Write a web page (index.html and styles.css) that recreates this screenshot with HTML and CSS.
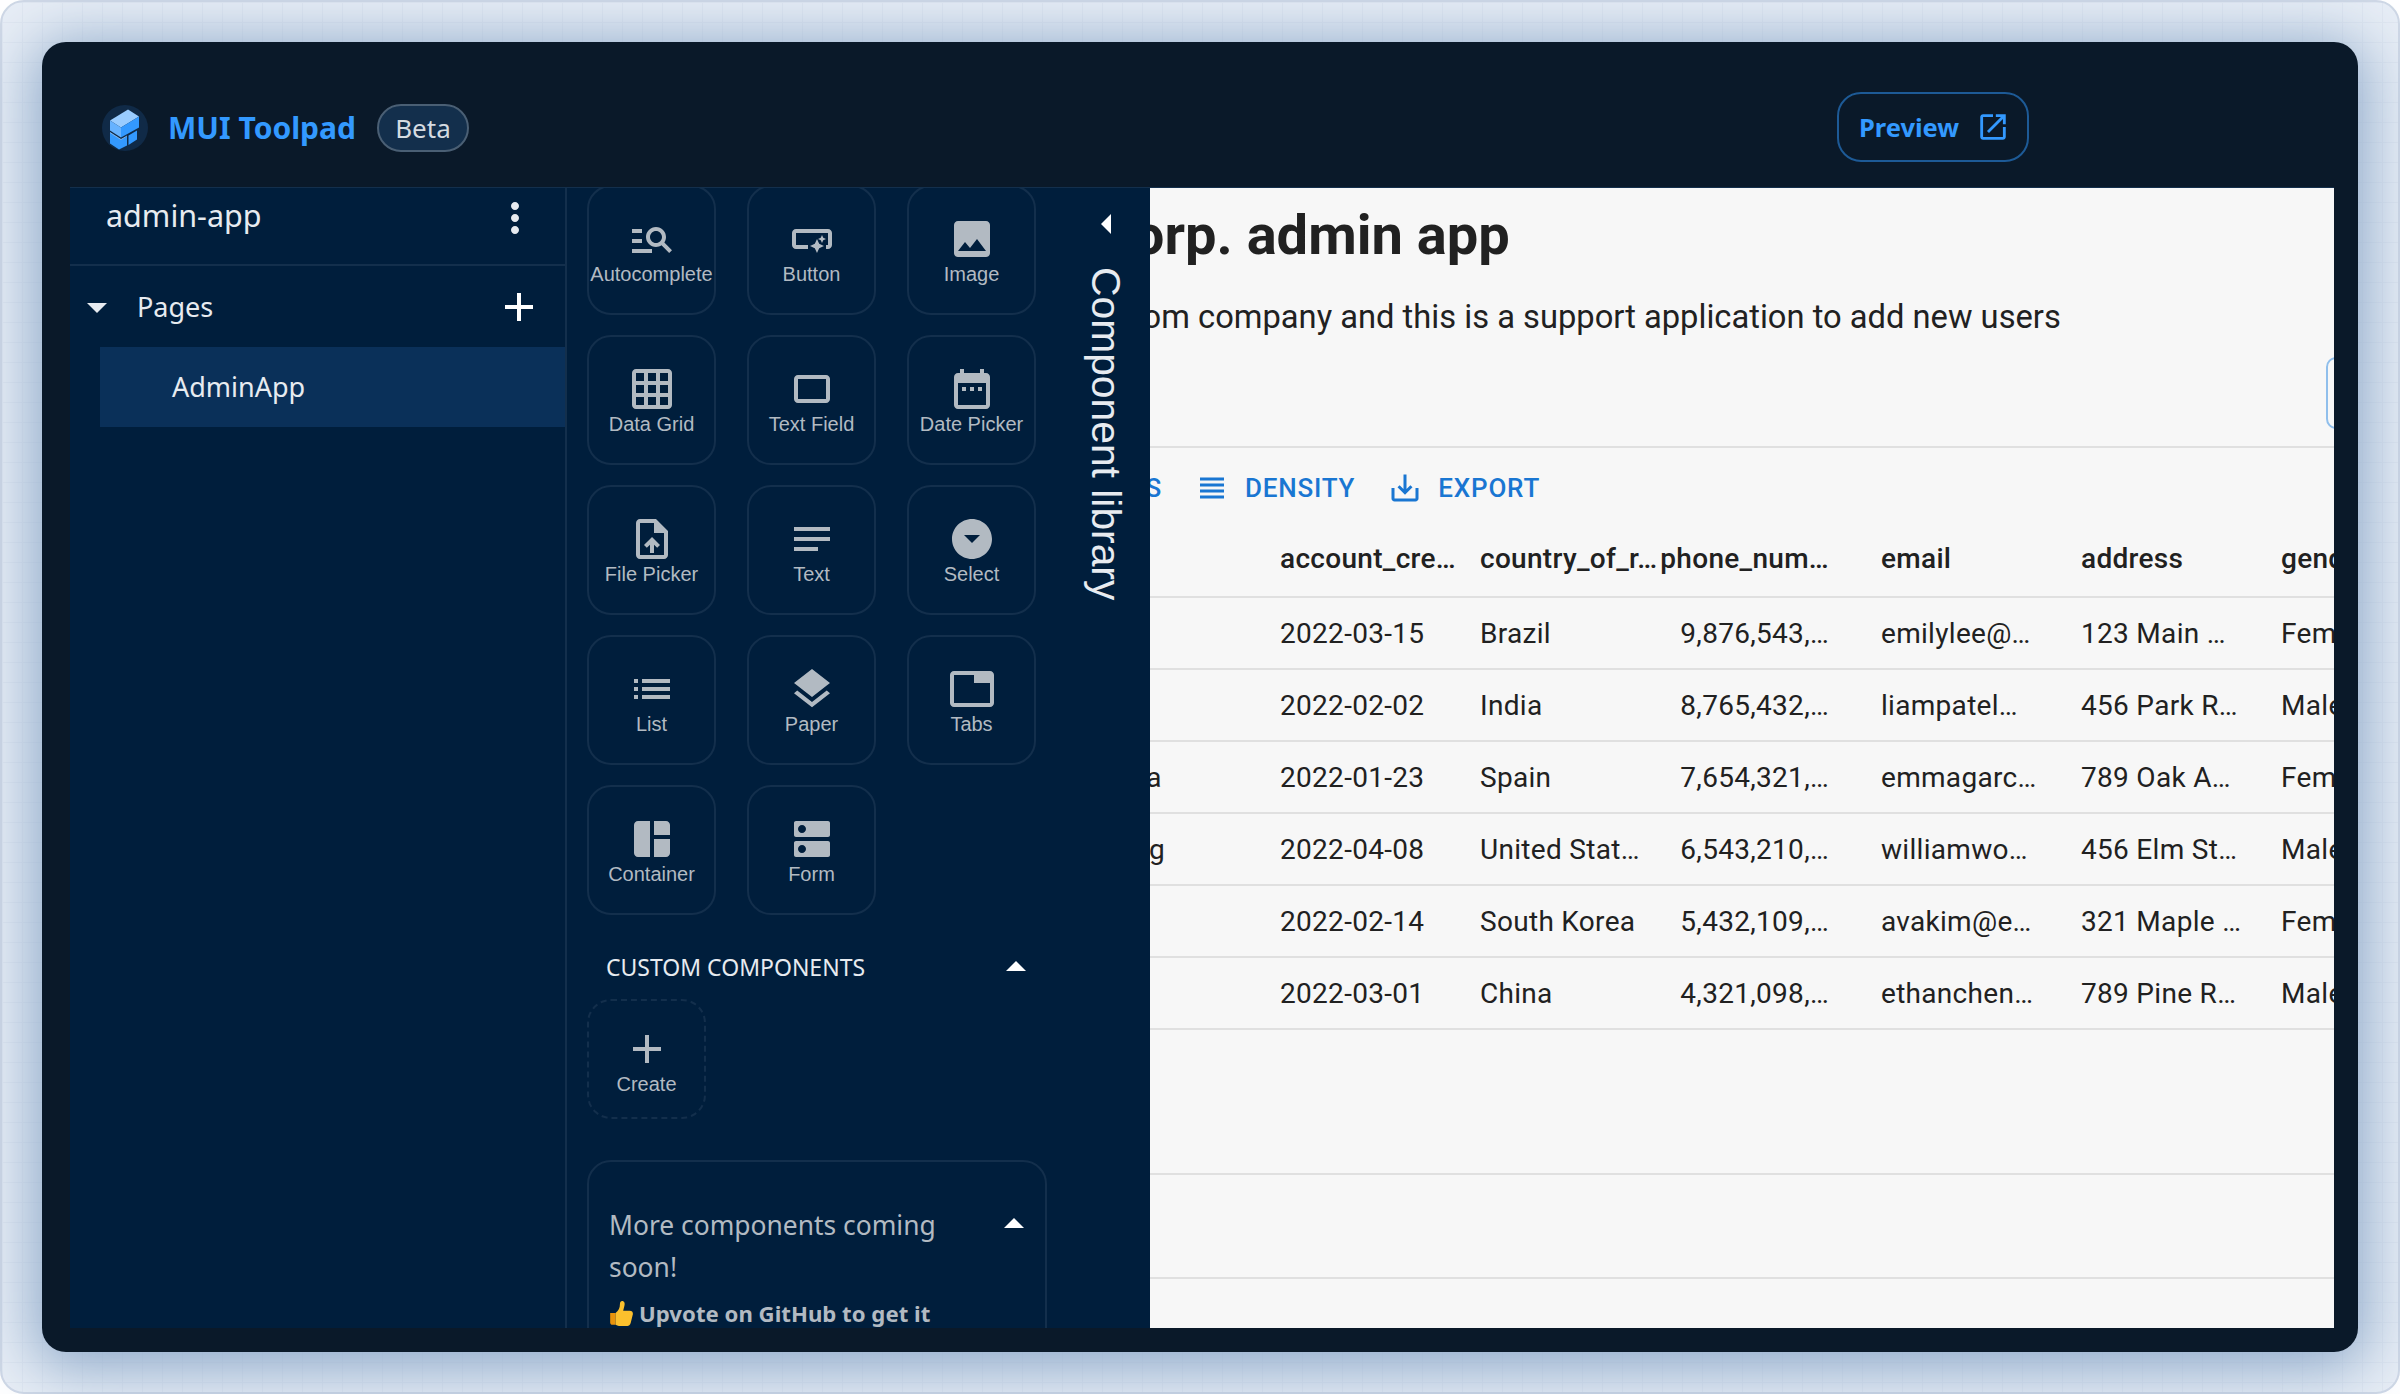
FILE: index.html
```html
<!DOCTYPE html>
<html lang="en">
<head>
    <meta charset="UTF-8" />
    <title>MUI Toolpad</title>
    <link rel="stylesheet" href="styles.css">
</head>
<body>
<div class="frame">
<div class="window">
    <header class="topbar">
        <svg class="logo" viewBox="12 8.5 46 46">
            <circle cx="35" cy="31.5" r="23" fill="#102a47"/>
            <path d="M20 24 38 13 49 20 31 31Z" fill="#99ccff"/>
            <path d="M20 24 31 31V41L20 34Z" fill="#66b2ff"/>
            <path d="M31 31 49 20V31L31 41Z" fill="#3399ff"/>
            <path d="M20 36 31 43 37 40V49L29 53 20 47Z" fill="#3399ff"/>
            <path d="M38.5 39 47 34V43L38.5 48.5Z" fill="#3399ff"/>
            <path d="M20 36 31 43 37 39.5" fill="none" stroke="#99ccff" stroke-width=".8"/>
        </svg>
        <span class="brand">MUI Toolpad</span>
        <span class="chip">Beta</span>
        <a class="preview">Preview
            <svg viewBox="0 0 24 24"><path d="M19 19H5V5h7V3H5c-1.11 0-2 .9-2 2v14c0 1.1.89 2 2 2h14c1.1 0 2-.9 2-2v-7h-2v7zM14 3v2h3.59l-9.83 9.83 1.41 1.41L19 6.41V10h2V3h-7z"/></svg>
        </a>
    </header>
    <div class="workspace">
        <nav class="pages">
            <div class="app-row">
                <span>admin-app</span>
                <svg viewBox="0 0 24 24"><path d="M12 8c1.1 0 2-.9 2-2s-.9-2-2-2-2 .9-2 2 .9 2 2 2zm0 2c-1.1 0-2 .9-2 2s.9 2 2 2 2-.9 2-2-.9-2-2-2zm0 6c-1.1 0-2 .9-2 2s.9 2 2 2 2-.9 2-2-.9-2-2-2z"/></svg>
            </div>
            <div class="pages-row">
                <svg class="caret" viewBox="0 0 24 24"><path d="M7 10l5 5 5-5z"/></svg>
                <span>Pages</span>
                <svg class="add" viewBox="0 0 24 24"><path d="M19 13h-6v6h-2v-6H5v-2h6V5h2v6h6v2z"/></svg>
            </div>
            <div class="page-item">AdminApp</div>
        </nav>
        <aside class="library">
            <div class="lib-scroll">
                <div class="cards">
                    <div class="card"><svg viewBox="0 0 24 24"><path d="M7 9H2V7h5v2zm0 3H2v2h5v-2zm13.59 7-3.83-3.83c-.8.52-1.74.83-2.76.83-2.76 0-5-2.24-5-5s2.24-5 5-5 5 2.24 5 5c0 1.02-.31 1.96-.83 2.75L22 17.59 20.59 19zM17 11c0-1.65-1.35-3-3-3s-3 1.35-3 3 1.35 3 3 3 3-1.35 3-3zM2 19h10v-2H2v2z"/></svg>Autocomplete</div>
                    <div class="card"><svg viewBox="0 0 24 24"><path d="M22 9v6c0 1.1-.9 2-2 2h-1v-2h1V9H4v6h6v2H4c-1.1 0-2-.9-2-2V9c0-1.1.9-2 2-2h16c1.1 0 2 .9 2 2zm-7.5 10 1.09-2.41L18 15.5l-2.41-1.09L14.5 12l-1.09 2.41L11 15.5l2.41 1.09L14.5 19zm2.5-5 .62-1.38L19 12l-1.38-.62L17 10l-.62 1.38L15 12l1.38.62L17 14z"/></svg>Button</div>
                    <div class="card"><svg viewBox="0 0 24 24"><path d="M21 19V5c0-1.1-.9-2-2-2H5c-1.1 0-2 .9-2 2v14c0 1.1.9 2 2 2h14c1.1 0 2-.9 2-2zM8.5 13.5l2.5 3.01L14.5 12l4.5 6H5l3.5-4.5z"/></svg>Image</div>
                    <div class="card"><svg viewBox="0 0 24 24"><path d="M20 2H4c-1.1 0-2 .9-2 2v16c0 1.1.9 2 2 2h16c1.1 0 2-.9 2-2V4c0-1.1-.9-2-2-2zM8 20H4v-4h4v4zm0-6H4v-4h4v4zm0-6H4V4h4v4zm6 12h-4v-4h4v4zm0-6h-4v-4h4v4zm0-6h-4V4h4v4zm6 12h-4v-4h4v4zm0-6h-4v-4h4v4zm0-6h-4V4h4v4z"/></svg>Data Grid</div>
                    <div class="card"><svg viewBox="0 0 24 24"><path d="M19 5H5c-1.1 0-2 .9-2 2v10c0 1.1.9 2 2 2h14c1.1 0 2-.9 2-2V7c0-1.1-.9-2-2-2zm0 12H5V7h14v10z"/></svg>Text Field</div>
                    <div class="card"><svg viewBox="0 0 24 24"><path d="M9 11H7v2h2v-2zm4 0h-2v2h2v-2zm4 0h-2v2h2v-2zm2-7h-1V2h-2v2H8V2H6v2H5c-1.11 0-1.99.9-1.99 2L3 20c0 1.1.89 2 2 2h14c1.1 0 2-.9 2-2V6c0-1.1-.9-2-2-2zm0 16H5V9h14v11z"/></svg>Date Picker</div>
                    <div class="card"><svg viewBox="0 0 24 24"><path d="M14 2H6c-1.1 0-1.99.9-1.99 2L4 20c0 1.1.89 2 1.99 2H18c1.1 0 2-.9 2-2V8l-6-6zm4 18H6V4h7v5h5v11zM8 15.01l1.41 1.41L11 14.84V19h2v-4.16l1.59 1.59L16 15.01 12.01 11 8 15.01z"/></svg>File Picker</div>
                    <div class="card"><svg viewBox="0 0 24 24"><path d="M3 18h12v-2H3v2zM3 6v2h18V6H3zm0 7h18v-2H3v2z"/></svg>Text</div>
                    <div class="card"><svg viewBox="0 0 24 24"><path d="M12 2C6.48 2 2 6.48 2 12s4.48 10 10 10 10-4.48 10-10S17.52 2 12 2zm0 12-4-4h8l-4 4z"/></svg>Select</div>
                    <div class="card"><svg viewBox="0 0 24 24"><path d="M3 13h2v-2H3v2zm0 4h2v-2H3v2zm0-8h2V7H3v2zm4 4h14v-2H7v2zm0 4h14v-2H7v2zM7 7v2h14V7H7z"/></svg>List</div>
                    <div class="card"><svg viewBox="0 0 24 24"><path d="M11.99 18.54l-7.37-5.73L3 14.07l9 7 9-7-1.63-1.27-7.38 5.74zM12 16l7.36-5.73L21 9l-9-7-9 7 1.63 1.27L12 16z"/></svg>Paper</div>
                    <div class="card"><svg viewBox="0 0 24 24"><path d="M21 3H3c-1.1 0-2 .9-2 2v14c0 1.1.9 2 2 2h18c1.1 0 2-.9 2-2V5c0-1.1-.9-2-2-2zm0 16H3V5h10v4h8v10z"/></svg>Tabs</div>
                    <div class="card"><svg viewBox="0 0 24 24"><path d="M11 21H5c-1.1 0-2-.9-2-2V5c0-1.1.9-2 2-2h6v18zm2 0h6c1.1 0 2-.9 2-2v-7h-8v9zm8-11V5c0-1.1-.9-2-2-2h-6v7h8z"/></svg>Container</div>
                    <div class="card"><svg viewBox="0 0 24 24"><path d="M20 13H4c-.55 0-1 .45-1 1v6c0 .55.45 1 1 1h16c.55 0 1-.45 1-1v-6c0-.55-.45-1-1-1zM7 19c-1.1 0-2-.9-2-2s.9-2 2-2 2 .9 2 2-.9 2-2 2zM20 3H4c-.55 0-1 .45-1 1v6c0 .55.45 1 1 1h16c.55 0 1-.45 1-1V4c0-.55-.45-1-1-1zM7 9c-1.1 0-2-.9-2-2s.9-2 2-2 2 .9 2 2-.9 2-2 2z"/></svg>Form</div>
                </div>
                <div class="custom-head">
                    <span>CUSTOM COMPONENTS</span>
                    <svg viewBox="0 0 24 24"><path d="M7 14l5-5 5 5z"/></svg>
                </div>
                <div class="card create"><svg viewBox="0 0 24 24"><path d="M19 13h-6v6h-2v-6H5v-2h6V5h2v6h6v2z"/></svg>Create</div>
                <div class="more">
                    <div class="more-head">
                        <span>More components coming soon!</span>
                        <svg viewBox="0 0 24 24"><path d="M7 14l5-5 5 5z"/></svg>
                    </div>
                    <div class="upvote">
                        <svg viewBox="0 0 22 24">
                            <path d="M1 11h5v11H3c-1 0-2-1-2-2z" fill="#e8930c"/>
                            <path d="M6 11c3-2 4-5 4-8 0-2 1-3 2-3 2 0 3 2 2 5l-1 4h6c2 0 3 1 3 3l-2 8c-.5 2-2 3-3 3H9c-1 0-2-.5-3-1z" fill="#fbc02d"/>
                        </svg>
                        <span>Upvote on GitHub to get it</span>
                    </div>
                </div>
            </div>
            <div class="rail">
                <svg viewBox="0 0 24 24"><path d="M14 7l-5 5 5 5z"/></svg>
                <span>Component library</span>
            </div>
        </aside>
        <main class="canvas">
            <div class="sheet">
                <h1>ACME Corp. admin app</h1>
                <p class="lead">You are a custom company and this is a support application to add new users</p>
                <div class="action-row"><span class="add-btn"></span></div>
                <div class="toolbar">
                    <span class="tool">COLUMNS</span>
                    <span class="tool"><svg viewBox="0 0 24 24"><path d="M4 15h16v-2H4v2zm0 4h16v-2H4v2zm0-8h16V9H4v2zm0-6v2h16V5H4z"/></svg>DENSITY</span>
                    <span class="tool"><svg viewBox="0 0 24 24"><path d="M19 12v7H5v-7H3v7c0 1.1.9 2 2 2h14c1.1 0 2-.9 2-2v-7h-2zm-6 .67l2.59-2.58L17 11.5l-5 5-5-5 1.41-1.41L11 12.67V3h2z"/></svg>EXPORT</span>
                </div>
                <div class="grid-row head">
                    <span>name</span><span>account_cre…</span><span>country_of_r…</span><span class="num">phone_num…</span><span>email</span><span>address</span><span>gender</span>
                </div>
                <div class="grid-row">
                    <span>Emily Lee</span><span>2022-03-15</span><span>Brazil</span><span class="num">9,876,543,…</span><span>emilylee@…</span><span>123 Main …</span><span>Female</span>
                </div>
                <div class="grid-row">
                    <span>Liam Patel</span><span>2022-02-02</span><span>India</span><span class="num">8,765,432,…</span><span>liampatel…</span><span>456 Park R…</span><span>Male</span>
                </div>
                <div class="grid-row">
                    <span>Emma Garcia</span><span>2022-01-23</span><span>Spain</span><span class="num">7,654,321,…</span><span>emmagarc…</span><span>789 Oak A…</span><span>Female</span>
                </div>
                <div class="grid-row">
                    <span>William Wong</span><span>2022-04-08</span><span>United Stat…</span><span class="num">6,543,210,…</span><span>williamwo…</span><span>456 Elm St…</span><span>Male</span>
                </div>
                <div class="grid-row">
                    <span>Ava Kim</span><span>2022-02-14</span><span>South Korea</span><span class="num">5,432,109,…</span><span>avakim@e…</span><span>321 Maple …</span><span>Female</span>
                </div>
                <div class="grid-row">
                    <span>Ethan Chen</span><span>2022-03-01</span><span>China</span><span class="num">4,321,098,…</span><span>ethanchen…</span><span>789 Pine R…</span><span>Male</span>
                </div>
                <div class="grid-gap"></div>
                <div class="grid-foot"></div>
            </div>
        </main>
    </div>
</div>
</div>
</body>
</html>
```

FILE: styles.css
```css
*{
    margin:0;
    padding:0;
    box-sizing:border-box;
}
html,body{
    height:100%;
    overflow:hidden;
    background:#fff;
}
.frame{
    height:1394px;
    padding:40px;
    border:2px solid #cfd8e6;
    border-radius:24px;
    background-color:#e8eef6;
    background-image:
        linear-gradient(#e0e7f1 1px,transparent 1px),
        linear-gradient(90deg,#e0e7f1 1px,transparent 1px);
    background-size:20px 20px;
}
.window{
    height:100%;
    padding:0 24px 24px 28px;
    display:flex;
    flex-direction:column;
    background:#0a1929;
    border-radius:24px;
    box-shadow:0 8px 60px 10px #8faaca;
}

/* top bar */
.topbar{
    height:146px;
    flex:none;
    display:flex;
    align-items:center;
    padding:26px 0 0 32px;
    border-bottom:1px solid #132f4c;
    font-family:"Noto Sans",sans-serif;
}
.logo{
    width:46px;
    height:46px;
    margin-right:20px;
}
.brand{
    color:#3399ff;
    font-size:30px;
    font-weight:700;
}
.chip{
    margin-left:21px;
    height:48px;
    width:92px;
    display:flex;
    align-items:center;
    justify-content:center;
    border:2px solid #4a5f74;
    border-radius:24px;
    background:#132f4c;
    color:#d5dbe1;
    font-size:26px;
}
.preview{
    margin:-2px 305px 0 auto;
    width:192px;
    height:70px;
    display:flex;
    align-items:center;
    justify-content:space-between;
    padding:0 17px 0 20px;
    border:2px solid #1d5a96;
    border-radius:24px;
    color:#3399ff;
    font-size:25.5px;
    font-weight:700;
}
.preview svg{
    width:34px;
    height:34px;
    fill:#3399ff;
}

.workspace{
    flex:1;
    min-height:0;
    display:flex;
    overflow:hidden;
}

/* pages column */
.pages{
    width:495px;
    flex:none;
    background:#001e3c;
    color:#e7ebf0;
    font-family:"Noto Sans",sans-serif;
}
.app-row{
    height:78px;
    display:flex;
    align-items:flex-start;
    justify-content:space-between;
    padding:6px 26px 0 36px;
    border-bottom:2px solid #132f4c;
    font-size:30.5px;
}
.app-row svg{
    width:48px;
    height:48px;
    fill:#e7ebf0;
}
.pages-row{
    height:81px;
    display:flex;
    align-items:center;
    padding:0 22px 0 3px;
    font-size:27px;
}
.pages-row .caret{
    width:48px;
    height:48px;
    fill:#e7ebf0;
    margin-right:16px;
}
.pages-row .add{
    margin-left:auto;
    width:48px;
    height:48px;
    fill:#fff;
}
.page-item{
    height:80px;
    margin-left:30px;
    padding:0 0 2px 72px;
    display:flex;
    align-items:center;
    background:#0a3059;
    font-size:27px;
}

/* component library */
.library{
    width:585px;
    flex:none;
    display:flex;
    background:#001e3c;
    border-left:2px solid #132f4c;
    overflow:hidden;
}
.lib-scroll{
    width:502px;
    flex:none;
    padding-left:20px;
}
.cards{
    margin-top:-3px;
    display:grid;
    grid-template-columns:repeat(3,129px);
    grid-auto-rows:130px;
    column-gap:31px;
    row-gap:20px;
}
.card{
    display:flex;
    flex-direction:column;
    align-items:center;
    padding-top:28px;
    border:2px solid #132f4c;
    border-radius:24px;
    color:#b2bac2;
    font-family:"Liberation Sans",sans-serif;
    font-size:20px;
    line-height:22px;
    white-space:nowrap;
}
.card svg{
    width:48px;
    height:48px;
    flex:none;
    fill:#b2bac2;
}
.custom-head{
    height:52px;
    margin-top:26px;
    padding:0 0 0 19px;
    width:459px;
    display:flex;
    align-items:center;
    justify-content:space-between;
    color:#e7ebf0;
    font-family:"Noto Sans",sans-serif;
    font-size:23px;
}
.custom-head svg{
    width:48px;
    height:48px;
    fill:#fff;
    margin-right:6px;
}
.card.create{
    width:119px;
    height:120px;
    margin-top:6px;
    padding-top:24px;
    border-style:dashed;
}
.more{
    width:460px;
    height:240px;
    margin-top:41px;
    padding:42px 7px 0 20px;
    border:2px solid #132f4c;
    border-radius:24px;
    font-family:"Noto Sans",sans-serif;
}
.more-head{
    display:flex;
    justify-content:space-between;
    color:#b2bac2;
    font-size:26.4px;
    line-height:42px;
}
.more-head span{
    width:340px;
}
.more-head svg{
    width:48px;
    height:48px;
    flex:none;
    margin-top:-4px;
    fill:#fff;
}
.upvote{
    margin-top:10px;
    display:flex;
    align-items:center;
    gap:6px;
    color:#b2bac2;
    font-size:22.2px;
    font-weight:700;
}
.upvote svg{
    width:24px;
    height:26px;
    flex:none;
}
.rail{
    flex:1;
    display:flex;
    flex-direction:column;
    align-items:center;
    padding:12px 5px 0 0;
    color:#e7ebf0;
    font-family:"Liberation Sans",sans-serif;
    font-size:40.8px;
}
.rail svg{
    width:48px;
    height:48px;
    fill:#fff;
    flex:none;
}
.rail span{
    writing-mode:vertical-rl;
    margin:19px 3px 0 0;
    white-space:nowrap;
}

/* canvas with the running app, scrolled to the right */
.canvas{
    flex:1;
    min-width:0;
    background:#f7f7f7;
    overflow:hidden;
    color:#212121;
    font-family:Roboto,sans-serif;
}
.sheet{
    width:1600px;
    margin-left:-159px;
}
h1{
    height:93px;
    margin-left:-63px;
    padding-top:16px;
    font-size:56px;
    line-height:62px;
    font-weight:700;
    white-space:nowrap;
}
.lead{
    height:76px;
    margin-left:-54px;
    font-size:32.7px;
    line-height:36px;
    padding-top:18px;
    white-space:nowrap;
}
.action-row{
    height:91px;
    border-bottom:2px solid #e0e0e0;
    width:1343px;
    display:flex;
    justify-content:flex-end;
}
.add-btn{
    width:60px;
    height:72px;
    margin-right:-52px;
    border:2px solid #90bfec;
    border-radius:10px;
}
.toolbar{
    height:79px;
    display:flex;
    align-items:center;
    gap:32px;
    padding-left:43px;
    color:#1976d2;
    font-size:26px;
    font-weight:500;
    letter-spacing:.8px;
}
.tool{
    display:flex;
    align-items:center;
    gap:15px;
}
.tool svg{
    width:36px;
    height:36px;
    fill:#1976d2;
}
.grid-row{
    width:1343px;
    height:72px;
    display:grid;
    grid-template-columns:289px 200px 200px 201px 200px 200px 200px;
    align-items:center;
    border-bottom:2px solid #e0e0e0;
    font-size:28px;
    letter-spacing:.3px;
    white-space:nowrap;
}
.grid-row.head{
    height:71px;
    padding-bottom:6px;
    font-weight:500;
}
.grid-row .num{
    justify-self:end;
    margin-right:52px;
}
.grid-gap{
    height:145px;
    border-bottom:2px solid #e0e0e0;
    width:1343px;
}
.grid-foot{
    height:104px;
    border-bottom:2px solid #e0e0e0;
    width:1343px;
}
```
